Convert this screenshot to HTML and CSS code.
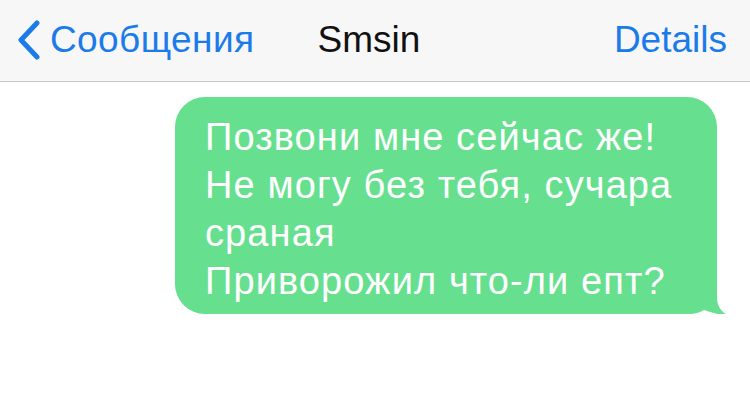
FILE: index.html
```html
<!DOCTYPE html>
<html lang="ru">
<head>
<meta charset="utf-8">
<link rel="stylesheet" href="styles.css">
</head>
<body>
<header class="nav">
  <div class="nav-left">
    <svg class="chev" width="26" height="40" viewBox="0 0 26 40"><path d="M21 3 L5 20 L21 37" fill="none" stroke="#1a7be9" stroke-width="5" stroke-linecap="round" stroke-linejoin="round"/></svg>
    <span class="back">Сообщения</span>
  </div>
  <div class="title">Smsin</div>
  <div class="nav-right"><span class="details">Details</span></div>
</header>
<main class="thread">
  <div class="bubble">
    <p class="msg">Позвони мне сейчас же!<br>Не могу без тебя, сучара<br>сраная<br>Приворожил что-ли епт?</p>
    <svg class="tail" width="50" height="40" viewBox="0 0 50 40"><path d="M0 0 H30 V22 C30 31 34 37 41 40 C33 40 25 38 17 35 C12 38 6 39 0 39 Z" fill="#66e08f"/></svg>
  </div>
</main>
</body>
</html>
```
FILE: styles.css
```css
html, body {
  margin: 0;
  padding: 0;
  background: #ffffff;
  font-family: "Liberation Sans", Arial, sans-serif;
}
.nav {
  height: 81px;
  background: #f7f7f7;
  border-bottom: 1px solid #c8c8c8;
  display: grid;
  grid-template-columns: 1fr auto 1fr;
  align-items: center;
  font-size: 37px;
  line-height: 1;
}
.nav-left {
  display: flex;
  align-items: center;
  padding-left: 16px;
  gap: 8px;
  color: #1a7be9;
}
.chev { display: block; margin-top: -2px; }
.back { padding-bottom: 2px; letter-spacing: 0.4px; }
.title {
  color: #111111;
  margin-right: 12px;
  padding-bottom: 2px;
}
.nav-right {
  display: flex;
  justify-content: flex-end;
  padding-right: 23px;
  color: #1a7be9;
}
.details { padding-bottom: 2px; }
.thread {
  display: flex;
  justify-content: flex-end;
  padding: 15px 33px 0 0;
}
.bubble {
  position: relative;
  width: 542px;
  background: #66e08f;
  border-radius: 30px;
  padding: 16px 0 9px 30px;
  box-sizing: border-box;
}
.msg {
  margin: 0;
  color: #ffffff;
  font-size: 38px;
  line-height: 48px;
  letter-spacing: 1.1px;
  white-space: nowrap;
}
.tail {
  position: absolute;
  right: -20px;
  bottom: -1px;
  display: block;
}
```
